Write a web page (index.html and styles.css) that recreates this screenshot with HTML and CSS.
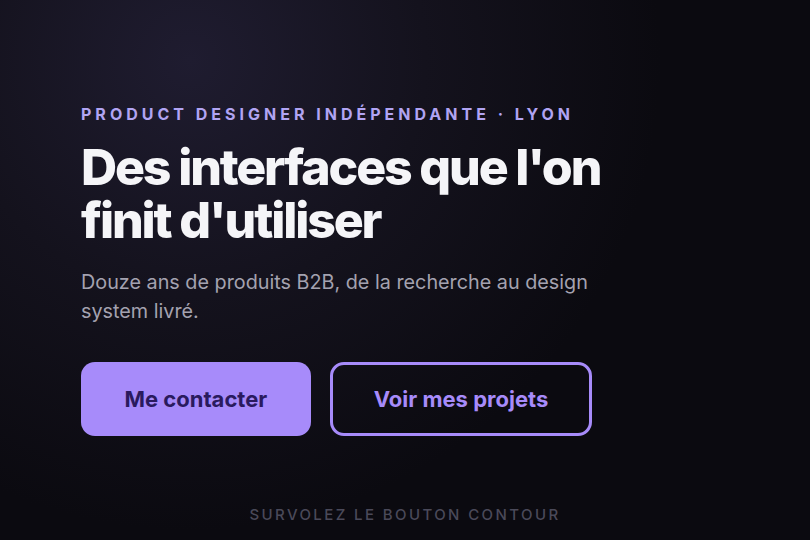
FILE: index.html
```html
<!DOCTYPE html>
<html lang="fr">
<head>
<meta charset="utf-8">
<title>Product designer</title>
<link rel="stylesheet" href="styles.css">
</head>
<body>
<div class="page">
  <main class="hero">
    <p class="eyebrow">Product designer indépendante · Lyon</p>
    <h1 class="title">Des interfaces que l'on finit d'utiliser</h1>
    <p class="lead">Douze ans de produits B2B, de la recherche au design system livré.</p>
    <div class="actions">
      <a class="btn btn-primary" href="#">Me contacter</a>
      <a class="btn btn-outline" href="#">Voir mes projets</a>
    </div>
  </main>
  <p class="hint">Survolez le bouton contour</p>
</div>
</body>
</html>
```
FILE: styles.css
```css
* { box-sizing: border-box; }
html, body { margin: 0; padding: 0; }
body {
  font-family: Inter, "Noto Sans", sans-serif;
  background: #0b0a10;
  color: #f4f4f7;
}
.page {
  width: 810px;
  height: 540px;
  display: flex;
  flex-direction: column;
  background: radial-gradient(circle at 190px 60px, #1f1c30 0%, #14121d 30%, #0b0a10 60%);
  overflow: hidden;
}
.hero {
  padding: 103px 81px 0;
  flex: 1;
}
.eyebrow {
  margin: 0;
  font-size: 16px;
  font-weight: 700;
  letter-spacing: 4px;
  text-transform: uppercase;
  color: #b1a4f3;
  line-height: 22px;
}
.title {
  margin: 16px 0 0;
  font-size: 50px;
  font-weight: 800;
  letter-spacing: -0.043em;
  line-height: 53px;
  color: #f5f5f8;
  max-width: 560px;
}
.lead {
  margin: 21px 0 0;
  font-size: 19.8px;
  line-height: 29px;
  color: #a4a2b0;
  max-width: 540px;
}
.actions {
  margin-top: 36px;
  display: flex;
  gap: 19px;
}
.btn {
  display: flex;
  align-items: center;
  justify-content: center;
  height: 74px;
  border-radius: 14px;
  font-size: 22px;
  font-weight: 700;
  text-decoration: none;
}
.btn-primary {
  padding: 0 43.5px;
  background: #a78bfa;
  color: #2a1a5e;
}
.btn-outline {
  padding: 0 41px;
  border: 3px solid #a78bfa;
  color: #a78bfa;
  background: transparent;
}
.hint {
  margin: 0 0 16px;
  text-align: center;
  font-size: 15px;
  font-weight: 500;
  letter-spacing: 2.4px;
  text-transform: uppercase;
  color: #4a4959;
}
```
